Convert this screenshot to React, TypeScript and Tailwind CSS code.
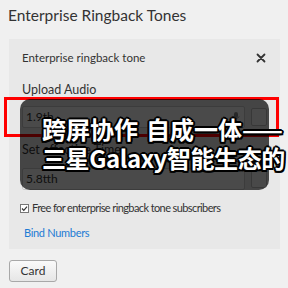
import React from 'react';

export default function App() {
  return (
    <div className="relative w-[288px] h-[288px] overflow-hidden bg-[#f0f0f0] font-['Lato',sans-serif] text-[#333]">
      <div className="pl-2 pt-[4px] text-[15.5px] leading-[22px]">Enterprise Ringback Tones</div>

      <div className="mt-[13px] ml-[9px] w-[271px] h-[210px] bg-[#e8e8e8] px-[13px] pt-[11px]">
        <div className="flex items-center justify-between h-[16px]">
          <span className="text-[11.5px]">Enterprise ringback tone</span>
          <svg width="10" height="10" viewBox="0 0 10 10" className="mr-[1px]">
            <path d="M1.5 1.5 L8.5 8.5 M8.5 1.5 L1.5 8.5" stroke="#333" strokeWidth="1.8" strokeLinecap="round" />
          </svg>
        </div>
        <div className="mt-[15px] text-[12.5px] leading-[18px]">Upload Audio</div>
        <div className="mt-[7px] flex items-center gap-[6px]">
          <div className="relative flex items-center w-[226px] h-[22px] border border-[#c8c8c8] bg-[#f7f7f7] rounded-[2px] pl-[3px] text-[12px]">
            1.9th
            <svg width="8" height="10" viewBox="0 0 8 10" className="absolute right-[4px] top-[5px]">
              <rect x="2" y="0" width="4" height="6" rx="2" fill="#888" />
              <path d="M1 4.5 Q4 9 7 4.5 M4 8 V10" stroke="#888" fill="none" />
            </svg>
          </div>
          <div className="w-[16px] h-[18px] border border-[#bbb] rounded-[2px] bg-[#f5f5f5]" />
        </div>
        <div className="mt-[13px] text-[12.5px] leading-[18px]">Set effective Time</div>
        <div className="mt-[9px] flex items-center gap-[6px]">
          <div className="flex items-center w-[226px] h-[22px] border border-[#c8c8c8] bg-[#f7f7f7] rounded-[2px] pl-[3px] text-[12px]">
            5.8tth
          </div>
          <div className="w-[16px] h-[18px] border border-[#bbb] rounded-[2px] bg-[#f5f5f5]" />
        </div>
        <div className="mt-[10px] h-[16px] flex items-center gap-[3px] -ml-[2px] text-[11px] tracking-[-0.6px] whitespace-nowrap">
          <svg width="9" height="9" viewBox="0 0 9 9" className="shrink-0">
            <rect x="0.5" y="0.5" width="8" height="8" fill="#fff" stroke="#777" />
            <path d="M2 4.5 L3.8 6.3 L7 2.6" stroke="#333" strokeWidth="1.2" fill="none" />
          </svg>
          <span>Free for enterprise ringback tone subscribers</span>
        </div>
        <div className="mt-[9px] h-[16px] flex items-center ml-[2px] text-[11px] tracking-[-0.3px] text-[#1d7bd4]">Bind Numbers</div>
      </div>

      <div className="mt-[11px] ml-[9px] w-[48px] h-[22px] flex items-center justify-center border border-[#a8a8a8] rounded-[3px] bg-gradient-to-b from-[#fafafa] to-[#e6e6e6] text-[12px]">
        Card
      </div>

      <div className="absolute left-[4px] top-[97px] w-[275px] h-[40px] border-[3px] border-[#f00]" />
      <div className="absolute left-[20px] top-[99px] w-[249px] h-[91px] rounded-[10px] bg-black/70" />
      <div className="absolute left-[42px] top-[114px] whitespace-nowrap font-['Noto_Sans_CJK_SC',sans-serif] font-bold text-[24px] leading-[29px] text-white [text-shadow:-1.5px_-1.5px_0_#000,1.5px_-1.5px_0_#000,-1.5px_1.5px_0_#000,1.5px_1.5px_0_#000,0_2px_0_#000,0_-2px_0_#000,2px_0_0_#000,-2px_0_0_#000]">
        <div>
          跨屏协作<span className="inline-block w-[8px]" />自成一体——
        </div>
        <div className="tracking-[-0.4px]">三星Galaxy智能生态的</div>
      </div>
    </div>
  );
}
